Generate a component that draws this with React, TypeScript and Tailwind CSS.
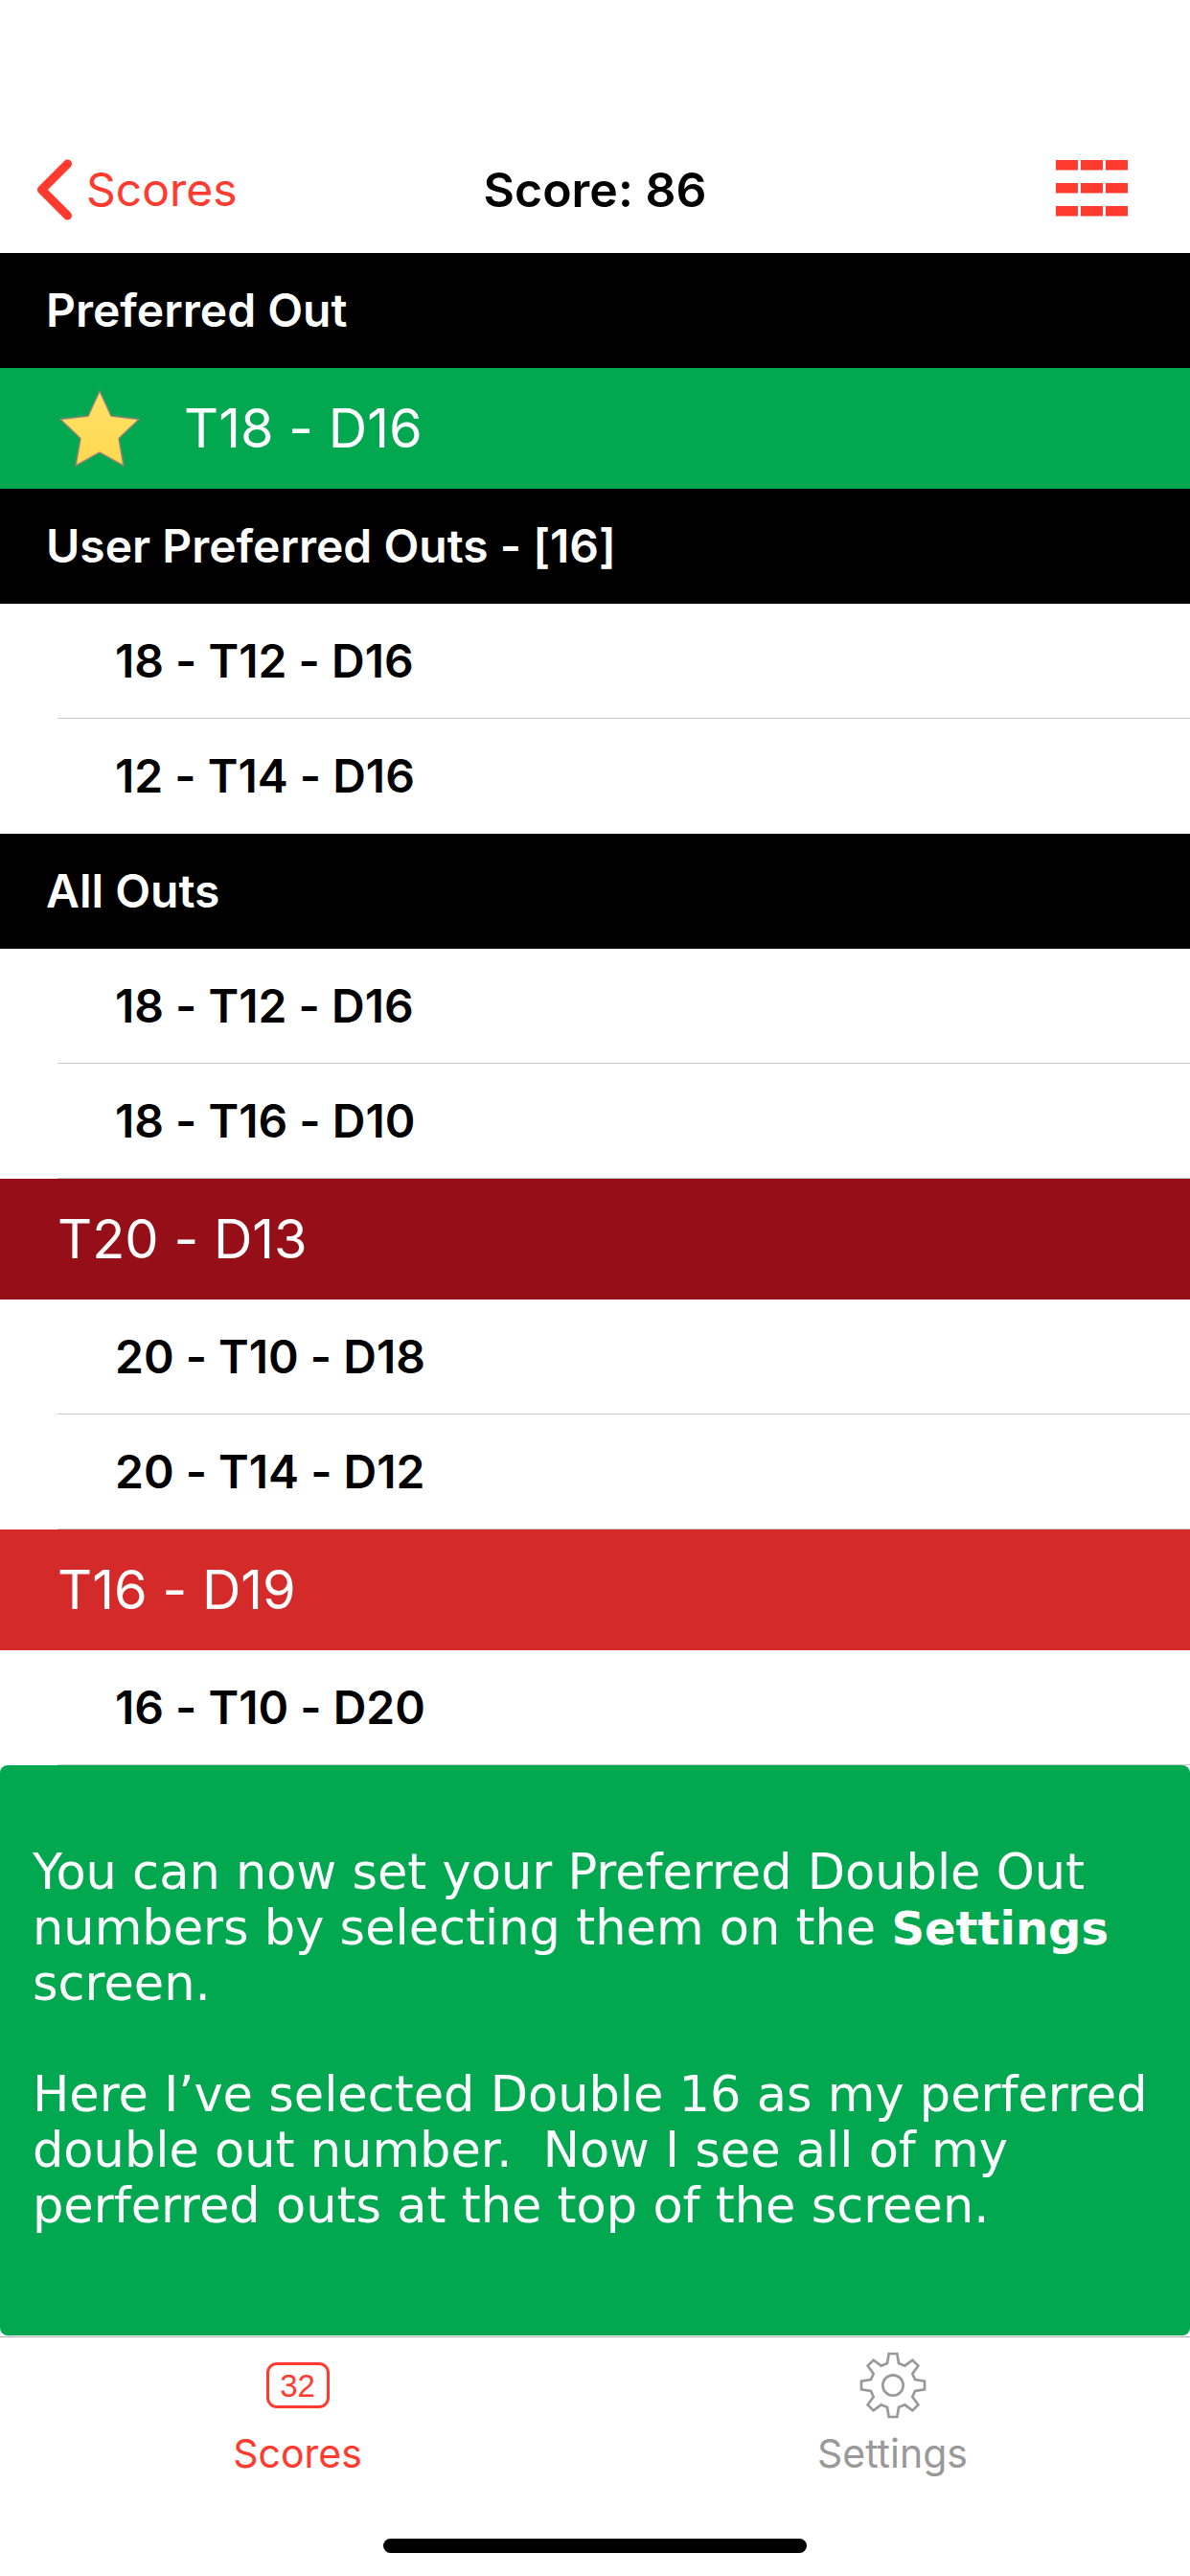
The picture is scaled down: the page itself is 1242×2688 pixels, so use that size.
import { useState, type ReactNode } from "react";

type Out = { label: string; tone?: "dark" | "bright"; last?: boolean };

const userOuts: Out[] = [{ label: "18 - T12 - D16" }, { label: "12 - T14 - D16", last: true }];
const allOuts: Out[] = [
    { label: "18 - T12 - D16" },
    { label: "18 - T16 - D10" },
    { label: "T20 - D13", tone: "dark" },
    { label: "20 - T10 - D18" },
    { label: "20 - T14 - D12" },
    { label: "T16 - D19", tone: "bright" },
    { label: "16 - T10 - D20" },
];

const App = () => {
    const [tab, setTab] = useState("scores");
    return (<div className="flex min-h-screen flex-col bg-white font-['Inter',sans-serif] text-black [font-feature-settings:'calt'_0]">
      <NavBar />
      <main className="flex flex-1 flex-col">
        <SectionTitle>Preferred Out</SectionTitle>
        <div className="flex h-[126px] items-center gap-[46px] bg-[#02a850] px-[62px] text-[56px] text-white">
          <StarIcon />
          <span>T18 - D16</span>
        </div>
        <SectionTitle>User Preferred Outs - [16]</SectionTitle>
        <OutList outs={userOuts}/>
        <SectionTitle>All Outs</SectionTitle>
        <OutList outs={allOuts}/>
        <Tip />
      </main>
      <nav className="grid grid-cols-2 border-t border-[#b0b0b0]">
        <TabButton label="Scores" active={tab === "scores"} onClick={() => setTab("scores")} icon={<ScoreIcon />}/>
        <TabButton label="Settings" active={tab === "settings"} onClick={() => setTab("settings")} icon={<GearIcon />}/>
      </nav>
      <div className="flex justify-center pt-[54px] pb-6">
        <div className="h-[15px] w-[442px] rounded-full bg-black"/>
      </div>
    </div>);
};

function NavBar() {
    return (<header className="grid h-[264px] grid-cols-3 items-center bg-white pt-[132px]">
      <a href="#scores" className="flex items-center gap-[14px] pl-[38px] text-[48px] text-[#ff3b30]">
        <svg width="38" height="64" viewBox="0 0 38 64" fill="none" stroke="currentColor" strokeWidth="9" strokeLinecap="round" strokeLinejoin="round">
          <path d="M32.5 5 5.5 32l27 27"/>
        </svg>
        Scores
      </a>
      <h1 className="text-center text-[50px] font-semibold">Score: 86</h1>
      <button type="button" aria-label="Grid" className="mr-[65px] justify-self-end text-[#ff3b30]">
        <svg width="75" height="62" viewBox="0 0 75 62" fill="currentColor">
          {[0, 24, 48].map((y) => [0, 26, 52].map((x) => (<rect key={`${x}-${y}`} x={x} y={y} width="23" height="10.5"/>)))}
        </svg>
      </button>
    </header>);
}

function SectionTitle({ children }: { children: ReactNode }) {
    return (<h2 className="flex h-[120px] items-center bg-black px-12 text-[48px] font-semibold text-white">{children}</h2>);
}

function OutList({ outs }: { outs: Out[] }) {
    return (<ul>
      {outs.map((out) => {
            if (out.tone) {
                return (<li key={out.label} className={`flex h-[126px] items-center px-[60px] text-[56px] text-white ${out.tone === "dark" ? "bg-[#960e17]" : "bg-[#d52a2a]"}`}>
            {out.label}
          </li>);
            }
            return (<li key={out.label} className="h-[120px] pl-[60px]">
            <div className={`flex h-full items-center border-b pl-[60px] text-[48px] font-semibold ${out.last ? "border-transparent" : "border-[#c8c7cc]"}`}>{out.label}</div>
          </li>);
        })}
    </ul>);
}

function Tip() {
    return (<section className="mb-px flex-1 rounded-lg bg-[#02a850] px-[34px] pt-[83px] pb-20 font-['DejaVu_Sans',sans-serif] text-[51px] leading-[58px] text-white">
      <p>
        You can now set your Preferred Double Out<br />
        numbers by selecting them on the <strong className="text-[48px] font-bold">Settings</strong><br />
        screen.
      </p>
      <p className="mt-[58px]">
        Here I’ve selected Double 16 as my perferred<br />
        double out number.&nbsp; Now I see all of my<br />
        perferred outs at the top of the screen.
      </p>
    </section>);
}

function TabButton({ label, icon, active, onClick }: {
    label: string;
    icon: ReactNode;
    active: boolean;
    onClick: () => void;
}) {
    return (<button type="button" onClick={onClick} className={`flex flex-col items-center pt-[14px] text-[41px] leading-[70px] ${active ? "text-[#ff3b30]" : "text-[#999999]"}`}>
      <span className="flex h-[72px] items-center">{icon}</span>
      {label}
    </button>);
}

function StarIcon() {
    return (<svg width="84" height="82" viewBox="0 0 84 82">
      <defs>
        <linearGradient id="star" x1="0" y1="0" x2="0" y2="1">
          <stop offset="0" stopColor="#ffe168"/>
          <stop offset="1" stopColor="#ffd84f"/>
        </linearGradient>
      </defs>
      <path d="M42 2 54 28 83 31.500 62 51.500 67 80 42 66 17 80 22 51.500 1 31.500 30 28Z" fill="url(#star)" stroke="#8f8476" strokeWidth="1.500"/>
    </svg>);
}

function ScoreIcon() {
    return (<span className="flex h-12 w-[66px] items-center justify-center rounded-[11px] border-[3px] border-current font-['Liberation_Sans',sans-serif] text-[33px] leading-none">32</span>);
}

function GearIcon() {
    return (<svg width="70" height="70" viewBox="-105 -105 210 210" fill="none" stroke="currentColor" strokeWidth="8">
      <circle r="32"/>
      <path d="M-13-99H13L18-69 37-61 61-79 79-61 61-36 69-18 99-13V13L69 18 61 36 79 61 61 79 37 61 18 69 13 99H-13L-18 69-37 61-61 79-79 61-61 36-69 18-99 13V-13L-69-18-61-36-79-61-61-79-37-61-18-69Z"/>
    </svg>);
}

export default App;
